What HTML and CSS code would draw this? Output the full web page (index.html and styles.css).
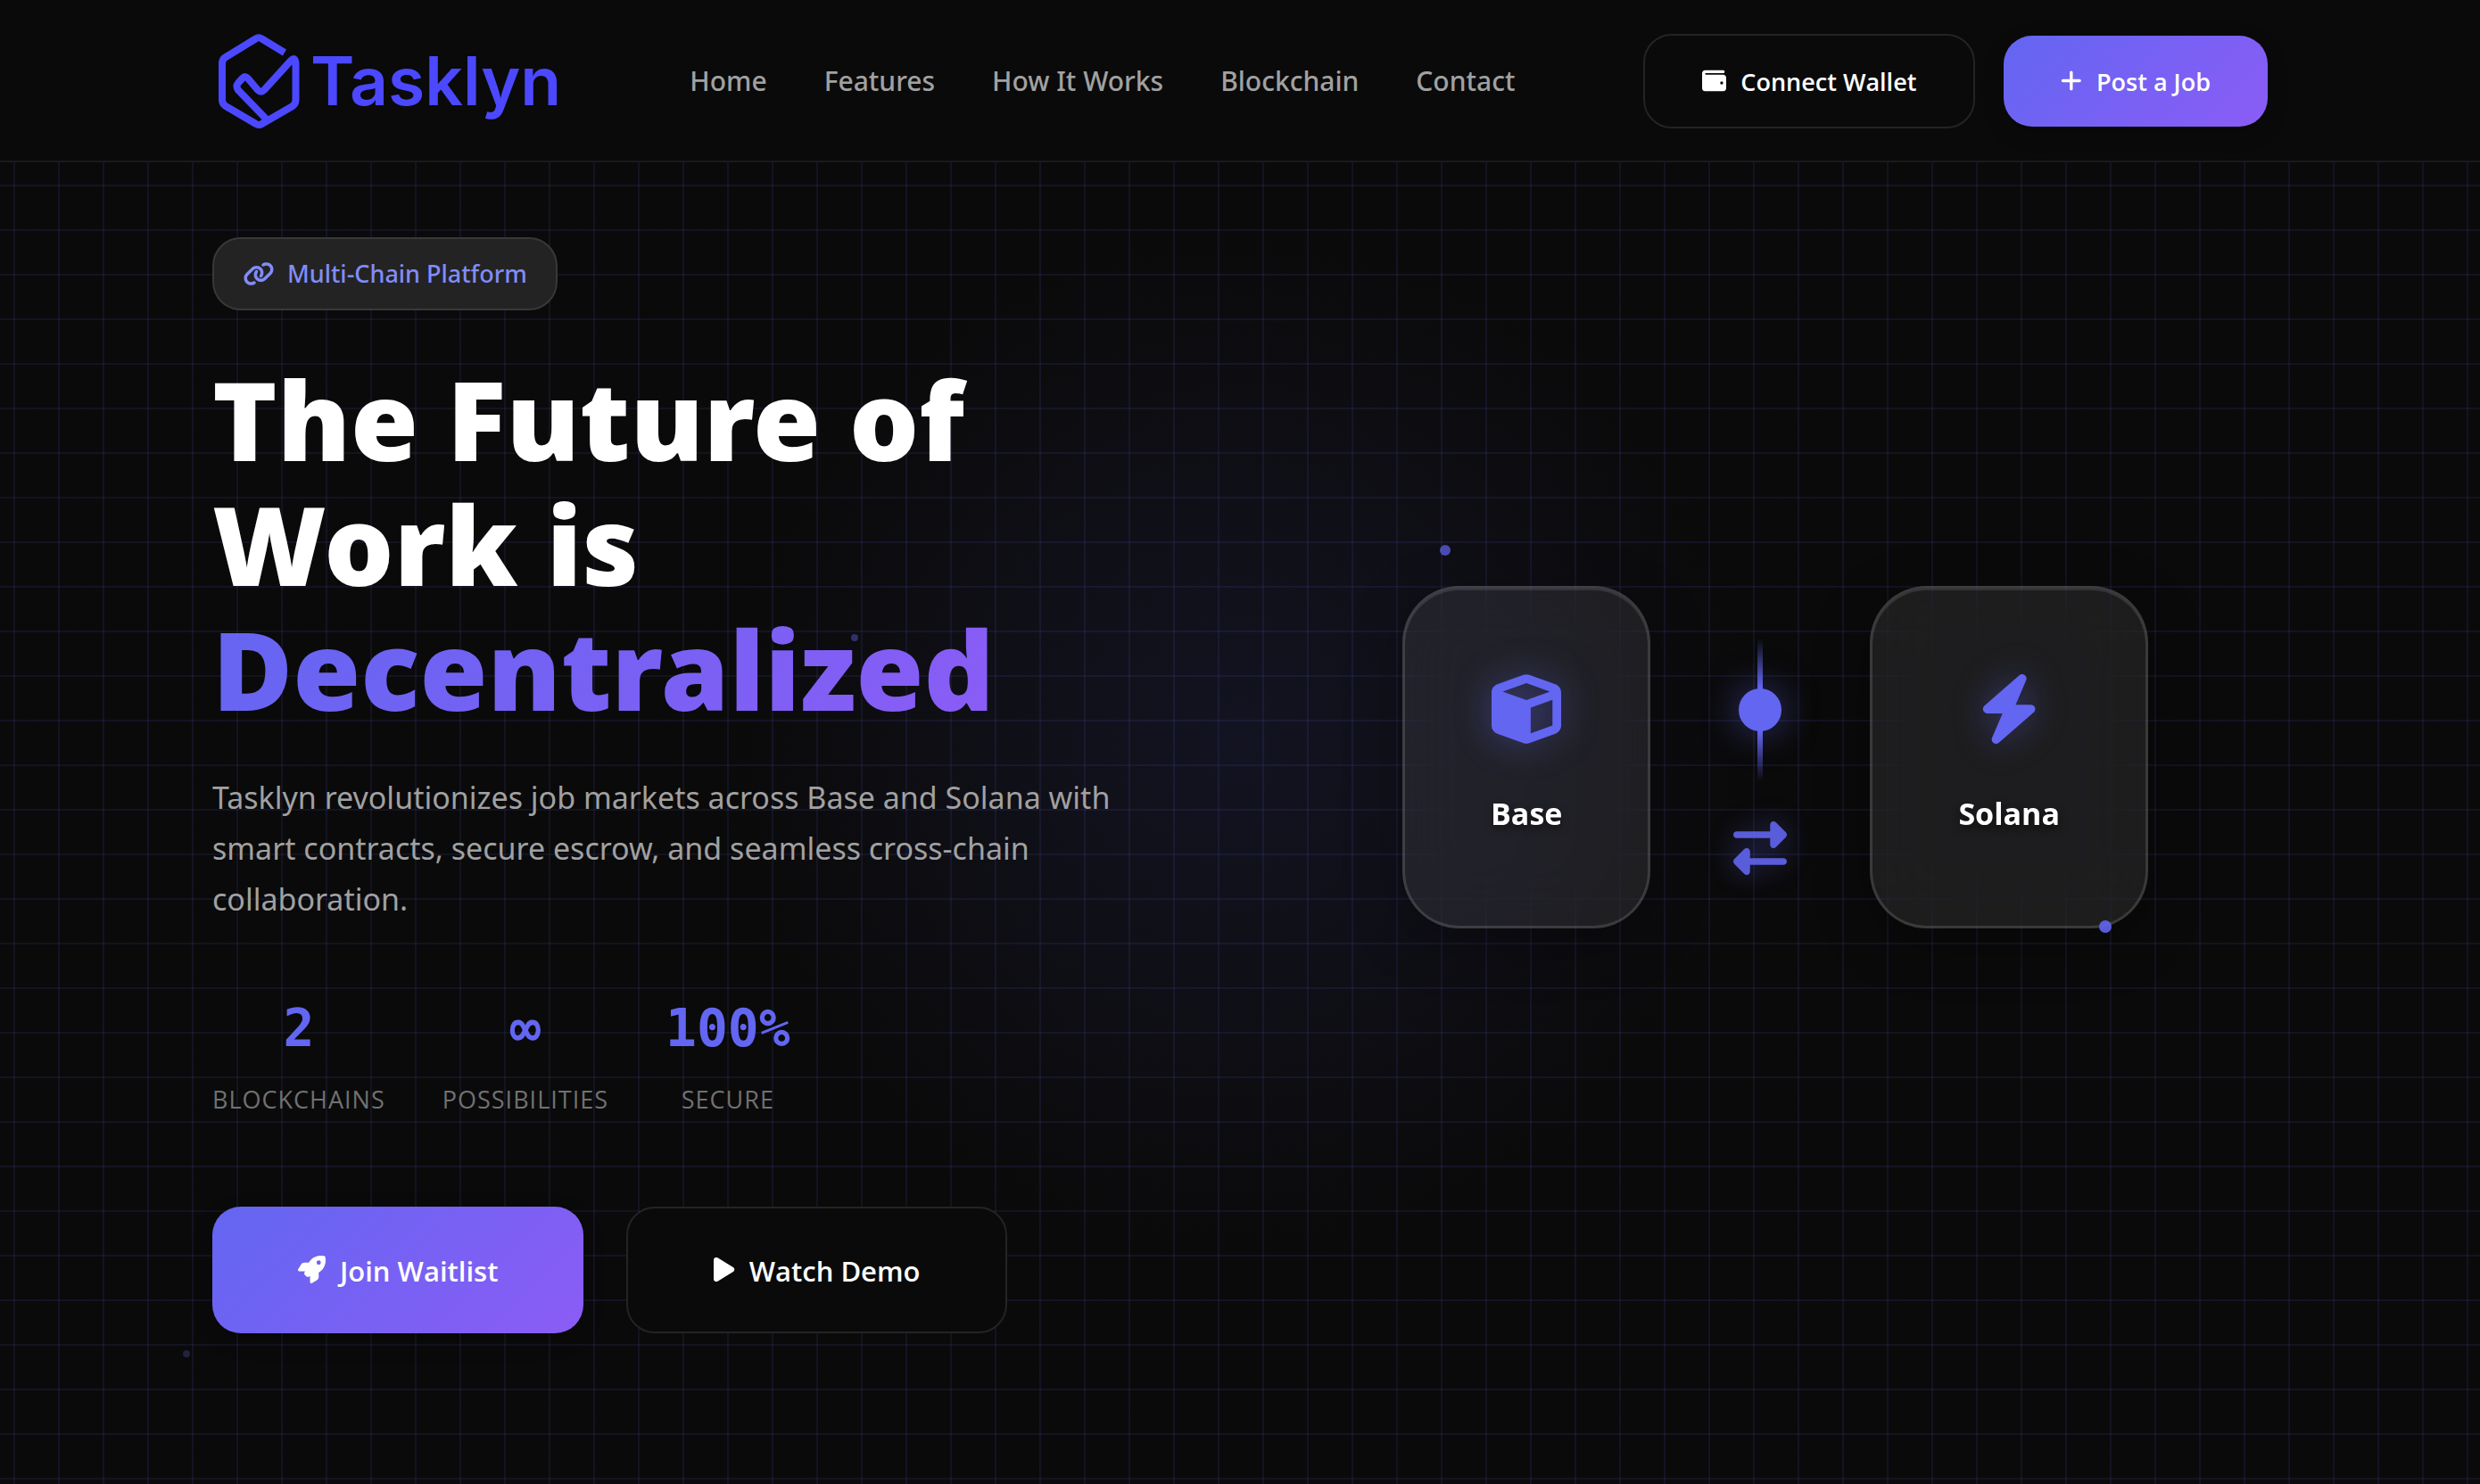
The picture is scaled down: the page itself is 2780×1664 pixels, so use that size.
FILE: index.html
```html
<!DOCTYPE html>
<html lang="en">
<head>
<meta charset="utf-8">
<meta name="viewport" content="width=device-width, initial-scale=1">
<title>Tasklyn</title>
<link rel="stylesheet" href="styles.css">
</head>
<body>
<header class="header">
  <div class="container header-inner">
    <a class="logo" href="#home">
      <svg class="logo-mark" viewBox="0 0 92 108" aria-hidden="true">
        <path d="M75 22 L49.500 6.500 Q46 4 42.500 6.500 L9 27 Q5 29.500 5 34 V75 Q5 79.500 9 82 L43 102 Q46 104 49.500 102 L84 82 Q87.500 79.500 87.500 75 V34 Q87 26 82 31 L52 64 Q48.500 67.500 45 64 L34 51 Q31 47.500 28 50.500 L23 56 Q20 59.500 23 64 L53 95 Q56 99 50 101"/>
      </svg>
      <span class="logo-text">Tasklyn</span>
    </a>
    <nav class="nav">
      <a href="#home">Home</a>
      <a href="#features">Features</a>
      <a href="#how">How It Works</a>
      <a href="#blockchain">Blockchain</a>
      <a href="#contact">Contact</a>
    </nav>
    <div class="header-actions">
      <button class="btn btn-outline" type="button">
        <svg class="icon" viewBox="0 0 512 512" aria-hidden="true"><path d="M64 32C28.700 32 0 60.700 0 96V416c0 35.300 28.700 64 64 64H448c35.300 0 64-28.700 64-64V192c0-35.300-28.700-64-64-64H80c-8.800 0-16-7.200-16-16s7.200-16 16-16H448c17.700 0 32-14.300 32-32s-14.300-32-32-32H64zM416 272a32 32 0 1 1 0 64 32 32 0 1 1 0-64z"/></svg>
        Connect Wallet
      </button>
      <button class="btn btn-primary" type="button">
        <svg class="icon icon-plus" viewBox="0 0 448 512" aria-hidden="true"><path d="M256 80c0-17.700-14.300-32-32-32s-32 14.300-32 32V224H48c-17.700 0-32 14.300-32 32s14.300 32 32 32H192V432c0 17.700 14.300 32 32 32s32-14.300 32-32V288H400c17.700 0 32-14.300 32-32s-14.300-32-32-32H256V80z"/></svg>
        Post a Job
      </button>
    </div>
  </div>
</header>

<main class="hero" id="home">
  <div class="hero-glow"></div>
  <span class="particle particle-a"></span>
  <span class="particle particle-b"></span>
  <span class="particle particle-c"></span>
  <span class="particle particle-d"></span>
  <div class="container hero-inner">
    <section class="hero-content">
      <div class="badge">
        <svg class="icon-link" viewBox="0 0 640 512" aria-hidden="true"><path d="M579.8 267.7c56.500-56.500 56.500-148 0-204.500c-50-50-128.800-56.500-186.300-15.400l-1.600 1.100c-14.400 10.300-17.700 30.300-7.400 44.600s30.300 17.700 44.600 7.400l1.600-1.100c32.100-22.900 76-19.300 103.800 8.600c31.500 31.500 31.500 82.500 0 114L422.300 334.800c-31.500 31.500-82.500 31.500-114 0c-27.900-27.900-31.500-71.800-8.600-103.800l1.100-1.600c10.300-14.400 6.900-34.400-7.400-44.600s-34.400-6.900-44.600 7.400l-1.100 1.600C206.500 251.200 213 330 263 380c56.500 56.500 148 56.500 204.500 0L579.800 267.700zM60.200 244.300c-56.500 56.500-56.500 148 0 204.500c50 50 128.800 56.500 186.300 15.400l1.600-1.100c14.400-10.300 17.700-30.300 7.400-44.600s-30.300-17.700-44.600-7.400l-1.600 1.100c-32.100 22.900-76 19.300-103.800-8.600C74 372 74 321 105.500 289.500L217.700 177.200c31.500-31.500 82.500-31.500 114 0c27.900 27.900 31.500 71.800 8.600 103.900l-1.100 1.600c-10.300 14.400-6.900 34.400 7.400 44.600s34.400 6.900 44.600-7.400l1.100-1.600C433.500 260.800 427 182 377 132c-56.500-56.500-148-56.500-204.500 0L60.200 244.300z"/></svg>
        <span>Multi-Chain Platform</span>
      </div>
      <h1 class="title">The Future of<br>Work is<br><span class="title-accent">Decentralized</span></h1>
      <p class="lead">Tasklyn revolutionizes job markets across Base and Solana with smart contracts, secure escrow, and seamless cross-chain collaboration.</p>
      <div class="stats">
        <div class="stat"><span class="stat-value">2</span><span class="stat-label">Blockchains</span></div>
        <div class="stat"><span class="stat-value">∞</span><span class="stat-label">Possibilities</span></div>
        <div class="stat"><span class="stat-value">100%</span><span class="stat-label">Secure</span></div>
      </div>
      <div class="hero-actions">
        <button class="btn btn-large btn-primary" type="button">
          <svg class="icon" viewBox="0 0 512 512" aria-hidden="true"><path d="M156.600 384.900L125.700 354c-8.500-8.500-11.500-20.800-7.700-32.200c3-8.900 7-20.500 11.800-33.800L24 288c-8.600 0-16.600-4.600-20.900-12.100s-4.200-16.700 .2-24.100l52.500-88.500c13-21.900 36.500-35.300 61.900-35.300l82.300 0c2.400-4 4.800-7.700 7.200-11.300C289.100-4.100 411.100-8.100 483.900 5.300c11.600 2.100 20.600 11.200 22.800 22.800c13.400 72.900 9.300 194.800-111.400 276.700c-3.500 2.400-7.300 4.800-11.300 7.200v82.300c0 25.400-13.400 49-35.300 61.900l-88.500 52.500c-7.400 4.400-16.600 4.500-24.100 .2s-12.100-12.200-12.100-20.900V380.800c-14.100 4.900-26.400 8.900-35.700 11.900c-11.200 3.600-23.400 .5-31.800-7.800zM384 168a40 40 0 1 0 0-80 40 40 0 1 0 0 80z"/></svg>
          Join Waitlist
        </button>
        <button class="btn btn-large btn-outline" type="button">
          <svg class="icon icon-play" viewBox="0 0 384 512" aria-hidden="true"><path d="M73 39c-14.800-9.100-33.400-9.400-48.500-.9S0 62.600 0 80V432c0 17.400 9.400 33.400 24.500 41.900s33.700 8.100 48.500-.9L361 297c14.300-8.700 23-24.200 23-41s-8.700-32.200-23-41L73 39z"/></svg>
          Watch Demo
        </button>
      </div>
    </section>

    <section class="hero-visual">
      <div class="chain-card">
        <svg class="chain-icon" viewBox="0 0 512 512" aria-hidden="true"><path d="M234.500 5.700c13.900-5 29.100-5 43.100 0l192 68.600C495 83.400 512 107.500 512 134.600V377.400c0 27-17 51.200-42.500 60.300l-192 68.600c-13.900 5-29.100 5-43.100 0l-192-68.600C17 428.600 0 404.500 0 377.400V134.600c0-27 17-51.200 42.500-60.300l192-68.600zM256 66L82.300 128 256 190l173.700-62L256 66zm32 368.600l160-57.100v-188L288 246.600v188z"/></svg>
        <span class="chain-name">Base</span>
      </div>
      <div class="connector">
        <div class="connector-line"><span class="connector-node"></span></div>
        <svg class="connector-icon" viewBox="0 0 512 512" aria-hidden="true"><path d="M32 96l320 0V32c0-12.900 7.800-24.600 19.800-29.600s25.700-2.200 34.900 6.900l96 96c6 6 9.400 14.100 9.400 22.600s-3.400 16.600-9.400 22.600l-96 96c-9.200 9.200-22.900 11.900-34.900 6.900s-19.800-16.600-19.800-29.600V160L32 160c-17.700 0-32-14.300-32-32s14.300-32 32-32zM480 352c17.700 0 32 14.300 32 32s-14.300 32-32 32H160v64c0 12.900-7.800 24.600-19.800 29.600s-25.700 2.200-34.900-6.900l-96-96c-6-6-9.400-14.100-9.400-22.600s3.400-16.600 9.400-22.600l96-96c9.200-9.200 22.900-11.900 34.900-6.900s19.800 16.600 19.800 29.600l0 64H480z"/></svg>
      </div>
      <div class="chain-card">
        <svg class="chain-icon" viewBox="0 0 448 512" aria-hidden="true"><path d="M349.400 44.600c5.900-13.700 1.500-29.700-10.600-38.500s-28.600-8-39.900 1.800l-256 224c-10 8.800-13.600 22.900-8.900 35.300S50.700 288 64 288H175.500L98.600 467.400c-5.900 13.700-1.500 29.700 10.600 38.500s28.600 8 39.900-1.800l256-224c10-8.800 13.600-22.900 8.900-35.300s-16.600-20.700-30-20.700H272.500L349.400 44.600z"/></svg>
        <span class="chain-name">Solana</span>
      </div>
    </section>
  </div>
</main>
</body>
</html>
```
FILE: styles.css
```css
:root {
  --bg: #0a0a0a;
  --primary: #6366f1;
  --secondary: #8b5cf6;
  --gradient: linear-gradient(135deg, #6366f1 0%, #8b5cf6 100%);
  --text: #ffffff;
  --text-soft: #a1a1a1;
  --text-muted: #717171;
  --font-ui: "Open Sans", "Noto Sans", sans-serif;
  --font-text: "Noto Sans", "Open Sans", sans-serif;
}

* {
  box-sizing: border-box;
}

body {
  margin: 0;
  min-height: 100vh;
  display: flex;
  flex-direction: column;
  background: var(--bg);
  color: var(--text);
  font-family: var(--font-text);
  overflow-x: hidden;
}

.container {
  width: 100%;
  max-width: 2400px;
  margin: 0 auto;
  padding: 0 48px;
}

.header {
  border-bottom: 2px solid #1a1a1c;
  background: var(--bg);
}

.header-inner {
  height: 180px;
  display: flex;
  align-items: center;
  justify-content: space-between;
  padding-top: 2px;
}

.logo {
  display: flex;
  align-items: center;
  gap: 12px;
  padding-left: 6px;
  color: #4b48ff;
  text-decoration: none;
}

.logo-mark {
  width: 92px;
  height: 108px;
  fill: none;
  stroke: currentColor;
  stroke-width: 8;
  stroke-linejoin: round;
}

.logo-text {
  font-family: Inter, sans-serif;
  font-size: 75px;
  font-weight: 600;
  line-height: 96px;
}

.nav {
  display: flex;
  gap: 64px;
}

.nav a {
  color: var(--text-soft);
  font-size: 30px;
  font-weight: 500;
  line-height: 48px;
  text-decoration: none;
}

.header-actions {
  display: flex;
  align-items: center;
  gap: 32px;
}

.btn {
  display: flex;
  align-items: center;
  justify-content: center;
  gap: 16px;
  padding: 32px 64px 30px;
  border: 0;
  border-radius: 32px;
  color: var(--text);
  font-family: var(--font-ui);
  font-size: 27px;
  font-weight: 600;
  line-height: 40px;
  white-space: nowrap;
}

.btn-primary {
  background: var(--gradient);
  box-shadow: 0 8px 24px rgba(0, 0, 0, 0.2);
}

.btn-outline {
  border: 2px solid #242424;
  background: #0a0a0b;
}

.btn-large {
  min-height: 142px;
  padding: 46px 96px 44px;
  font-size: 31px;
  line-height: 48px;
}

.icon {
  height: 1em;
  margin-bottom: 4px;
  fill: currentColor;
}

.hero {
  position: relative;
  flex: 1;
  overflow: hidden;
  background-image:
    linear-gradient(rgba(99, 102, 241, 0.1) 2px, transparent 2px),
    linear-gradient(90deg, rgba(99, 102, 241, 0.1) 2px, transparent 2px);
  background-size: 50px 50px;
  background-position: 15px 25px;
}

.hero-glow {
  position: absolute;
  left: 50%;
  top: 650px;
  width: 1200px;
  height: 1200px;
  transform: translate(-50%, -50%);
  background: radial-gradient(circle, rgba(99, 102, 241, 0.1) 0%, transparent 70%);
}

.particle {
  position: absolute;
  z-index: 2;
  border-radius: 50%;
  background: var(--primary);
}

.particle-a {
  left: 1614px;
  top: 429px;
  width: 12px;
  height: 12px;
  opacity: 0.7;
}

.particle-b {
  left: 954px;
  top: 529px;
  width: 8px;
  height: 8px;
  opacity: 0.4;
}

.particle-c {
  left: 2353px;
  top: 850px;
  width: 14px;
  height: 14px;
  opacity: 0.9;
}

.particle-d {
  left: 205px;
  top: 1332px;
  width: 8px;
  height: 8px;
  opacity: 0.25;
}

.hero-inner {
  position: relative;
  display: grid;
  grid-template-columns: 1fr 1fr;
  gap: 96px;
  padding-top: 84px;
}

.hero-content {
  display: flex;
  flex-direction: column;
  align-items: flex-start;
}

.badge {
  display: flex;
  align-items: center;
  gap: 14px;
  height: 82px;
  padding: 0 32px;
  border: 2px solid #373839;
  border-radius: 32px;
  background: #232324;
  color: #818cf8;
  font-size: 27px;
  font-weight: 500;
  line-height: 40px;
}

.icon-link {
  width: 36px;
  height: 28px;
  fill: currentColor;
}

.title {
  margin: 52px 0 46px;
  font-size: 123px;
  font-weight: 900;
  line-height: 140px;
}

.title-accent {
  background: var(--gradient);
  background-clip: text;
  -webkit-background-clip: text;
  color: transparent;
}

.lead {
  max-width: 1020px;
  margin: 0 0 76px;
  color: var(--text-soft);
  font-size: 34px;
  line-height: 57px;
}

.stats {
  display: flex;
  gap: 64px;
  margin-bottom: 96px;
}

.stat {
  display: flex;
  flex-direction: column;
  align-items: center;
  gap: 16px;
}

.stat-value {
  color: var(--primary);
  font-family: "DejaVu Sans Mono", monospace;
  font-size: 58px;
  font-weight: 700;
  line-height: 80px;
}

.stat-label {
  color: var(--text-muted);
  font-family: var(--font-ui);
  font-size: 27px;
  letter-spacing: 1px;
  line-height: 48px;
  text-transform: uppercase;
}

.hero-actions {
  display: flex;
  gap: 48px;
}

.hero-visual {
  display: flex;
  align-items: center;
  justify-content: center;
  padding-bottom: 64px;
}

.chain-card {
  display: flex;
  flex-direction: column;
  align-items: center;
  gap: 48px;
  height: 384px;
  padding: 96px;
  border: 3px solid rgba(255, 255, 255, 0.13);
  border-radius: 64px;
  background: rgba(255, 255, 255, 0.08);
  box-shadow: 0 16px 64px rgba(0, 0, 0, 0.3), inset 0 2px 0 rgba(255, 255, 255, 0.1);
  backdrop-filter: blur(40px);
}

.chain-icon {
  height: 80px;
  fill: var(--primary);
  filter: drop-shadow(0 0 20px rgba(99, 102, 241, 0.4));
}

.chain-name {
  font-family: var(--font-ui);
  font-size: 34px;
  font-weight: 700;
  line-height: 60px;
  text-shadow: 0 4px 8px rgba(0, 0, 0, 0.5);
}

.connector {
  width: 246px;
  display: flex;
  flex-direction: column;
  align-items: center;
  gap: 45px;
}

.connector-line {
  display: flex;
  align-items: center;
  justify-content: center;
  width: 6px;
  height: 160px;
  background: linear-gradient(transparent, var(--primary) 35%, var(--primary) 65%, transparent);
}

.connector-node {
  flex: none;
  width: 48px;
  height: 48px;
  border-radius: 50%;
  background: var(--primary);
  box-shadow: 0 0 40px rgba(99, 102, 241, 0.5);
}

.connector-icon {
  width: 60px;
  height: 60px;
  fill: var(--primary);
  opacity: 0.9;
  filter: drop-shadow(0 0 16px rgba(99, 102, 241, 0.5));
}
```
